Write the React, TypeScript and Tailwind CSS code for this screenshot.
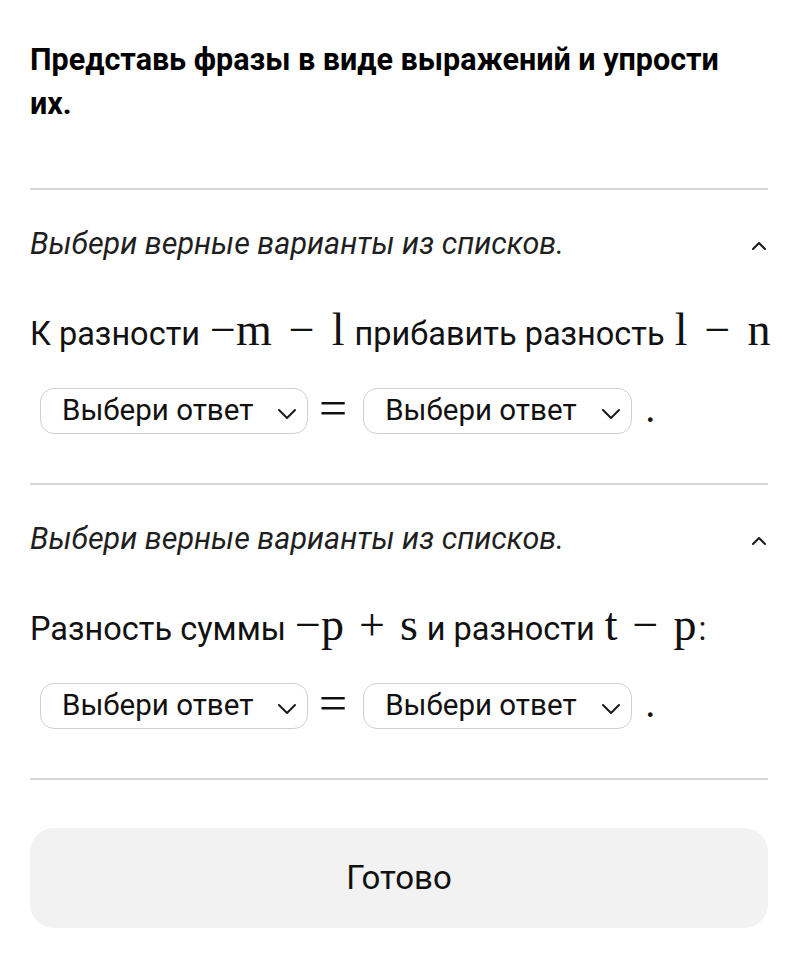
import React from "react";

function ChevronDown() {
  return (
    <svg width="20" height="12" viewBox="0 0 20 12" fill="none" className="mt-[5px] shrink-0">
      <path d="M2 2 L10 10 L18 2" stroke="#1a1a1a" strokeWidth="2" strokeLinecap="round" strokeLinejoin="round" />
    </svg>
  );
}

function ChevronUp() {
  return (
    <svg width="16" height="10" viewBox="0 0 16 10" fill="none" className="mr-[1px] mt-[4px] shrink-0">
      <path d="M2 8 L8 2 L14 8" stroke="#1a1a1a" strokeWidth="2" strokeLinecap="round" strokeLinejoin="round" />
    </svg>
  );
}

function Pill({ w }: { w: string }) {
  return (
    <div
      className={`flex h-[46px] items-center justify-between rounded-[14px] border-[1.5px] border-[#cfcfcf] pl-[21px] pr-[10px] ${w}`}
    >
      <span className="text-[29.5px] leading-none text-[#111]">Выбери ответ</span>
      <ChevronDown />
    </div>
  );
}

function Answers() {
  return (
    <div className="mt-[32px] flex h-[46px] items-center pl-[10px]">
      <Pill w="w-[268px]" />
      <span className="mb-[6px] ml-[11px] mr-[16px] font-['Liberation_Serif',serif] text-[50px] leading-[0] text-[#111]">=</span>
      <Pill w="w-[269px]" />
      <span className="ml-[13px] -mt-[4px] font-['Liberation_Serif',serif] text-[40px] leading-none text-[#111]">.</span>
    </div>
  );
}

function Section({ children }: { children: React.ReactNode }) {
  return (
    <div className="border-t-2 border-[#d6d6d6] pt-[34px] pb-[49px]">
      <div className="flex h-[40px] items-center justify-between">
        <span className="text-[30.5px] italic leading-none text-[#1f1f1f]">Выбери верные варианты из списков.</span>
        <ChevronUp />
      </div>
      <div className="mt-[48px] h-[44px] whitespace-nowrap text-[32.5px] leading-[44px] text-[#111]">
        {children}
      </div>
      <Answers />
    </div>
  );
}

const M = ({ children, cls = "" }: { children: React.ReactNode; cls?: string }) => (
  <span className={`font-['Liberation_Serif',serif] text-[46px] leading-[0] ${cls}`}>{children}</span>
);
const Op = ({ children, cls = "mx-[17px]" }: { children: React.ReactNode; cls?: string }) => (
  <span className={`font-['Liberation_Serif',serif] text-[46px] leading-[0] ${cls}`}>{children}</span>
);

export default function App() {
  return (
    <div className="min-h-[968px] w-[812px] bg-white pl-[30px] pr-[44px] pt-[38px] font-['Roboto',sans-serif] text-[#111]">
      <h1 className="text-[30.5px] font-bold leading-[44px] text-black">
        Представь фразы в виде выражений и упрости
        <br />
        их.
      </h1>
      <div className="mt-[62px]">
        <Section>
          <span>К разности</span>
          <M cls="ml-[10px]">−m</M>
          <Op>−</Op>
          <M>l</M>
          <span className="ml-[10px]">прибавить разность</span>
          <M cls="ml-[10px]">l</M>
          <Op>−</Op>
          <M>n</M>
        </Section>
        <Section>
          <span>Разность суммы</span>
          <M cls="ml-[9px]">−p</M>
          <Op cls="mx-[15px]">+</Op>
          <M>s</M>
          <span className="ml-[9px]">и разности</span>
          <M cls="ml-[10px]">t</M>
          <Op cls="mx-[15px]">−</Op>
          <M>p</M>
          <span className="ml-[2px]">:</span>
        </Section>
      </div>
      <div className="border-t-2 border-[#d6d6d6] pt-[48px]">
        <button className="flex h-[100px] w-full items-center justify-center rounded-[24px] bg-[#f2f2f2] text-[33px] text-[#111]">
          Готово
        </button>
      </div>
    </div>
  );
}
